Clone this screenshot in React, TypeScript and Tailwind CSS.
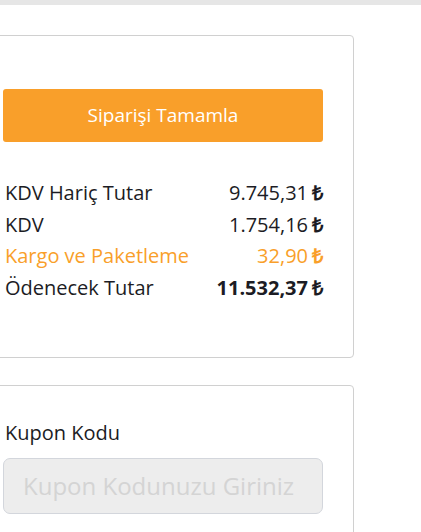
import React from "react";

const rows = [
  { label: "KDV Hariç Tutar", value: "9.745,31", accent: false, bold: false },
  { label: "KDV", value: "1.754,16", accent: false, bold: false },
  { label: "Kargo ve Paketleme", value: "32,90", accent: true, bold: false },
  { label: "Ödenecek Tutar", value: "11.532,37", accent: false, bold: true },
];

export default function App() {
  return (
    <div className="h-[532px] w-[421px] overflow-hidden bg-white font-['Open_Sans',sans-serif] text-[#222]">
      {/* top strip */}
      <div className="h-[5px] w-full bg-[#e6e6e6]" />

      <div className="-ml-[27px] w-[381px] pt-[30px]">
        {/* Summary card */}
        <div className="rounded-[4px] border border-[#d0d0d0] px-[29px] pt-[53px] pb-[53px]">
          <button className="flex h-[53px] w-[320px] items-center justify-center rounded-[3px] bg-[#f99f2a] text-[19px] text-white">
            Siparişi Tamamla
          </button>

          <div className="mt-[35px] flex w-[320px] flex-col">
            {rows.map((r) => (
              <div
                key={r.label}
                className={`flex h-[31.7px] items-center justify-between text-[20px] leading-none ${
                  r.accent ? "text-[#f99f2a]" : "text-[#1c1c24]"
                }`}
              >
                <span className="pl-[2px]">{r.label}</span>
                <span className={r.bold ? "font-bold" : ""}>
                  {r.value}
                  <span className="ml-[4px] font-bold">₺</span>
                </span>
              </div>
            ))}
          </div>
        </div>

        {/* Coupon card */}
        <div className="mt-[27px] h-[200px] rounded-[4px] border border-[#d0d0d0] px-[29px] pt-[33px]">
          <div className="pl-[2px] text-[20px] leading-[28px] text-[#1c1c24]">Kupon Kodu</div>
          <input
            className="mt-[11px] h-[56px] w-[320px] rounded-[7px] border border-[#d3d6dc] bg-[#ededed] px-[19px] text-[24px] outline-none placeholder:text-[#d4d4d4]"
            placeholder="Kupon Kodunuzu Giriniz"
          />
        </div>
      </div>
    </div>
  );
}
